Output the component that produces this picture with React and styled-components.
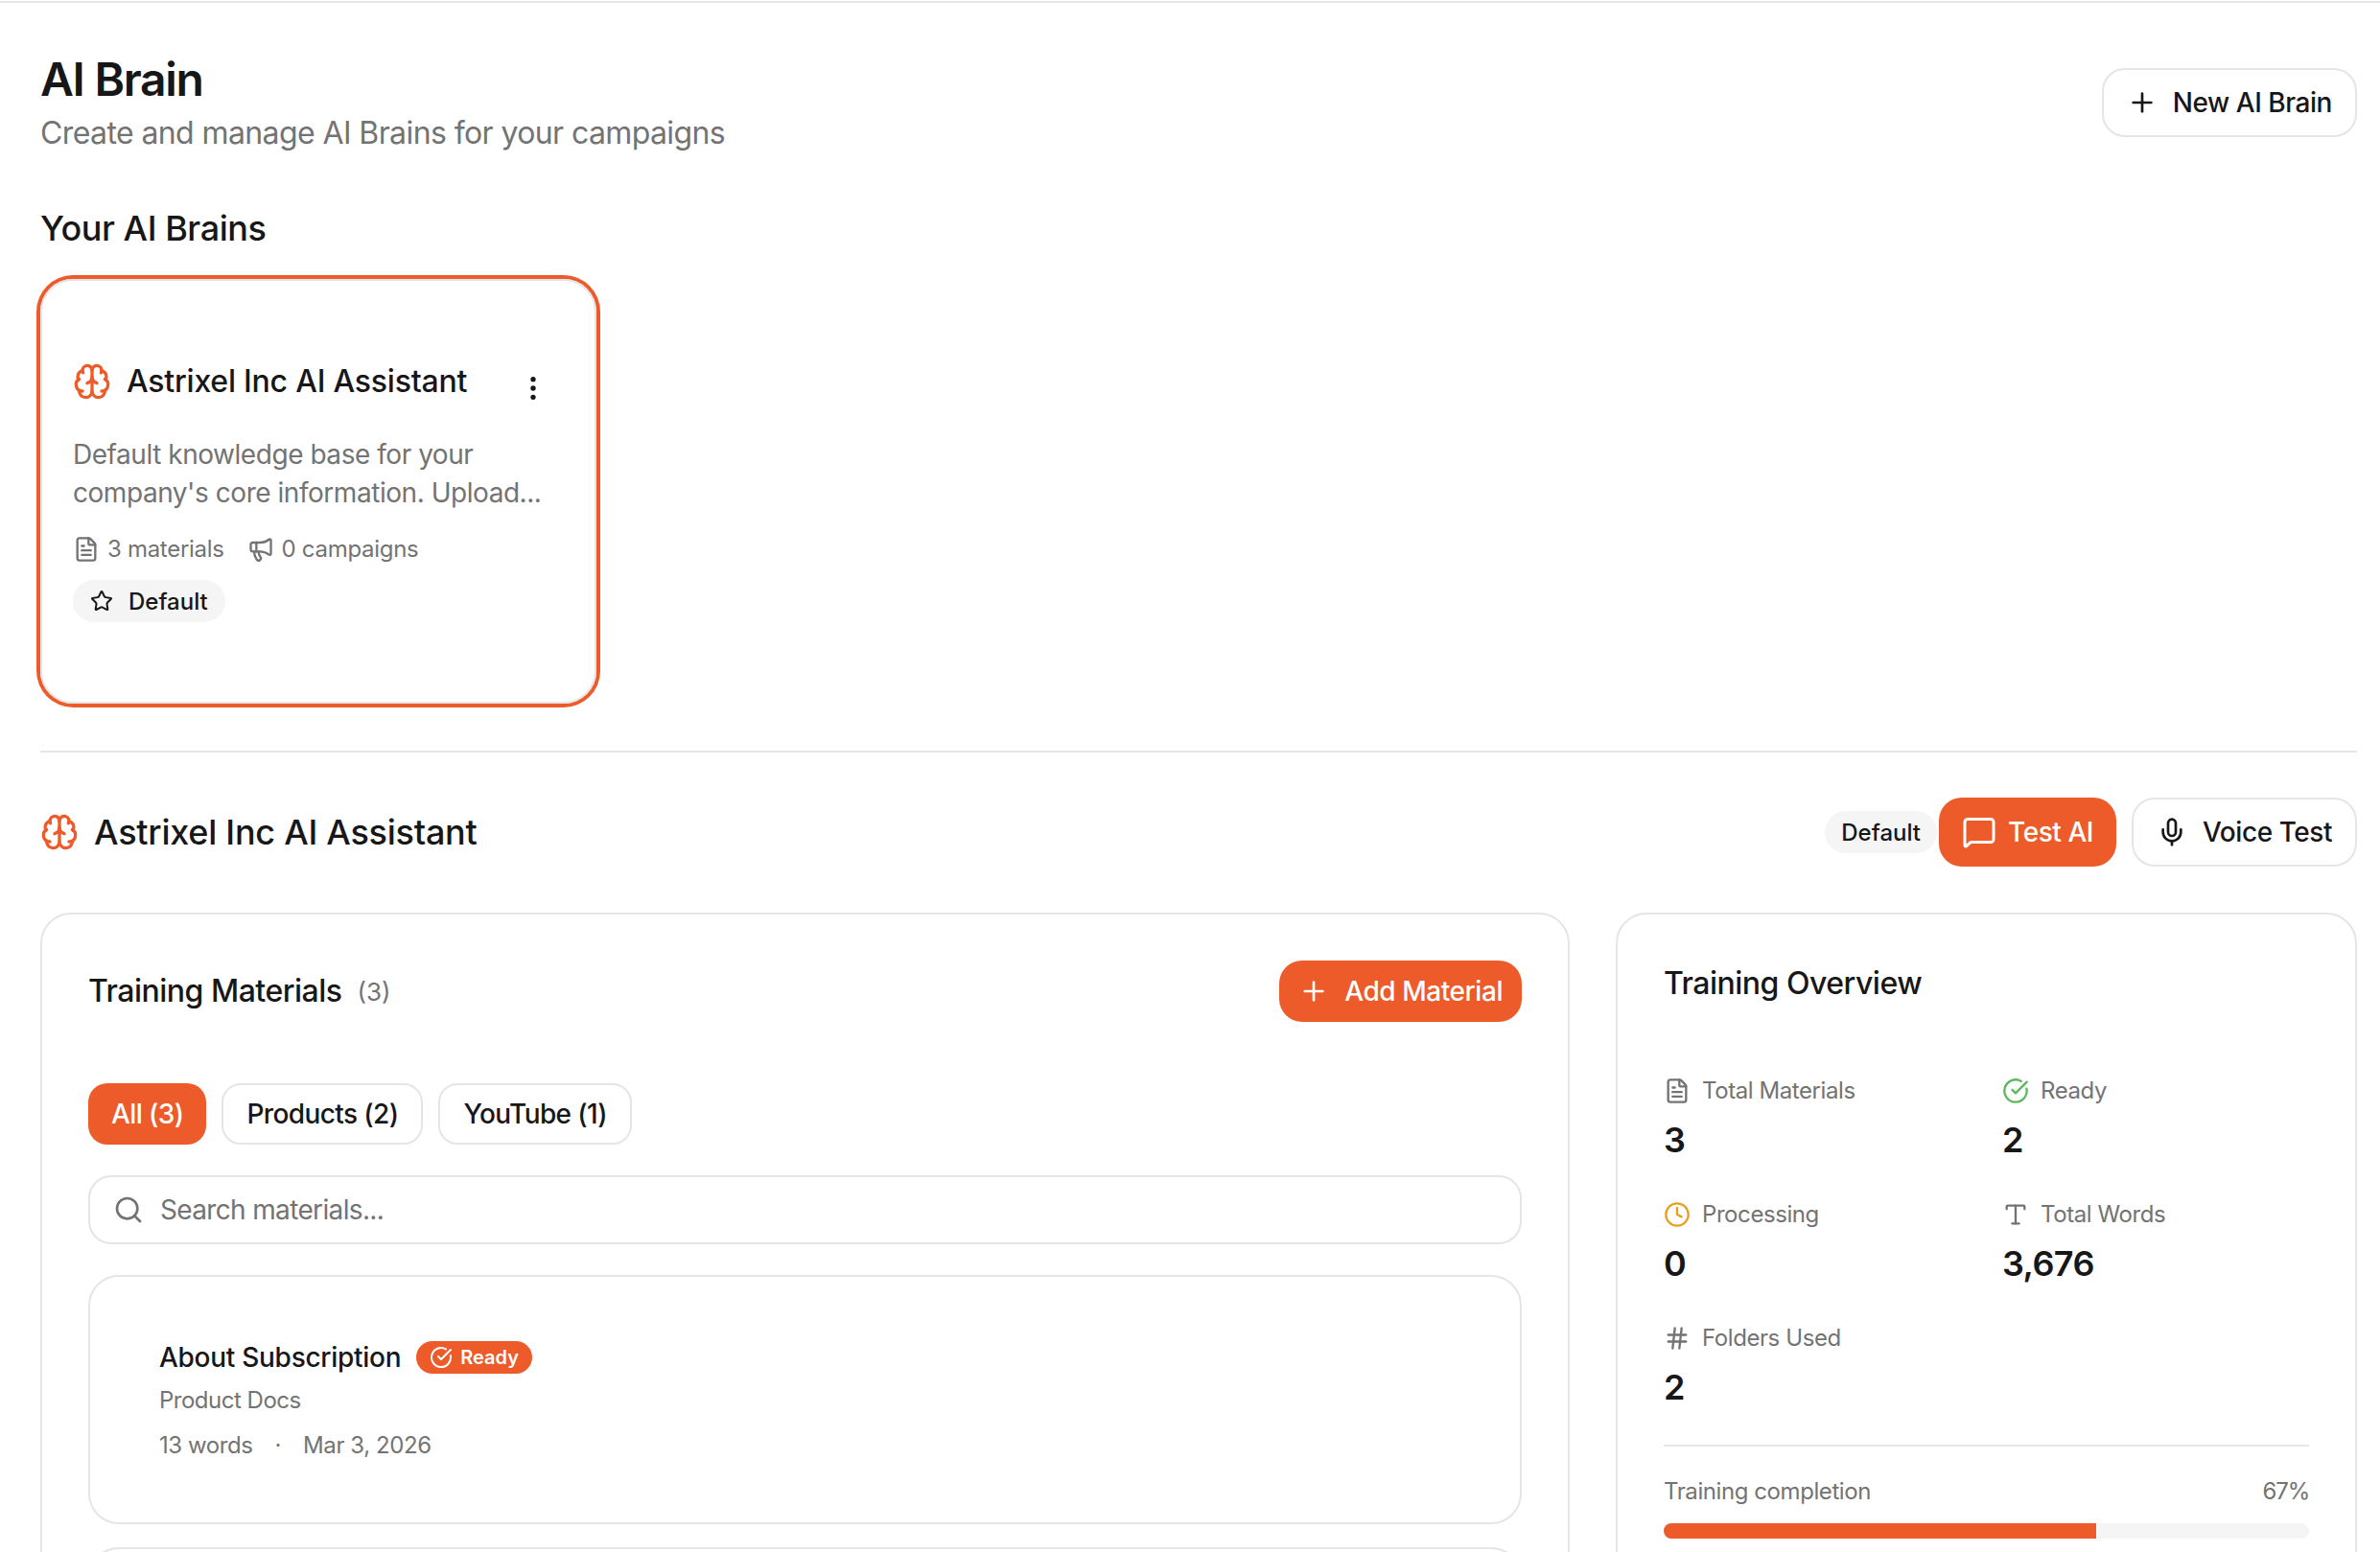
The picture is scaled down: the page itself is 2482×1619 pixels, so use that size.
import React from 'react';
import styled, { createGlobalStyle } from 'styled-components';
import { Brain, CircleCheckBig, Clock, EllipsisVertical, FileText, Hash, Megaphone, MessageSquare, Mic, Plus, Search, Star, Type } from 'lucide-react';

const ORANGE = '#ed5b2a';
const INK = '#171717';
const MUTED = '#737373';
const LINE = '#e5e5e5';

const Global = createGlobalStyle`
  html, body { margin: 0; padding: 0; height: 100%; overflow: hidden; background: #fff; }
  body { font-family: Inter, "Liberation Sans", sans-serif; color: ${INK}; -webkit-font-smoothing: antialiased; }
  * { box-sizing: border-box; }
`;

const Page = styled.div`height: 1619px; overflow: hidden; padding-top: 1px;`;
const TopRule = styled.div`height: 2px; background: ${LINE};`;
const Main = styled.main`padding: 48px 24px 0 42px; display: flex; flex-direction: column;`;

const Header = styled.header`display: flex; justify-content: space-between; align-items: center;`;
const Title = styled.h1`margin: 0; font-size: 48px; line-height: 64px; font-weight: 600; letter-spacing: -1.3px;`;
const Subtitle = styled.p`margin: 0; font-size: 32px; line-height: 48px; color: ${MUTED}; font-weight: 400; letter-spacing: -0.6px;`;

const Button = styled.button`
  display: inline-flex; align-items: center; gap: ${p => p.$gap || 16}px;
  height: ${p => p.$h || 72}px; padding: 0 ${p => p.$px || 24}px;
  border-radius: 24px; font: 500 28px/40px Inter, sans-serif; letter-spacing: -0.45px;
  border: ${p => (p.$primary ? 'none' : `2px solid ${LINE}`)};
  background: ${p => (p.$primary ? ORANGE : '#fff')};
  color: ${p => (p.$primary ? '#fff' : INK)};
`;

const SectionLabel = styled.h2`margin: 47px 0 0; font-size: 36px; line-height: 56px; font-weight: 500; letter-spacing: -0.45px;`;

const BrainCard = styled.article`
  margin: 25px 0 0 0; width: 580px; height: 443px; padding: 81px 48px 0 32px;
  border: 2px solid ${LINE}; border-radius: 34px;
  box-shadow: 0 0 0 4px ${ORANGE};
`;
const CardHead = styled.div`display: flex; justify-content: space-between; align-items: flex-start;`;
const CardTitleGroup = styled.div`display: flex; align-items: center; gap: 16px;`;
const CardTitle = styled.h3`margin: 0; font-size: 32px; line-height: 48px; font-weight: 500; letter-spacing: -0.22px;`;
const MoreButton = styled.span`display: flex; margin-top: 15px; color: ${INK};`;
const Description = styled.p`margin: 32px 0 0; font-size: 28px; line-height: 40px; color: ${MUTED}; letter-spacing: -0.46px;`;
const MetaRow = styled.div`display: flex; gap: 24px; margin-top: 23px; font-size: 24px; line-height: 32px; color: ${MUTED}; letter-spacing: -0.3px;`;
const MetaItem = styled.span`display: inline-flex; align-items: center; gap: 8px;`;
const Badge = styled.span`
  display: inline-flex; align-items: center; gap: ${p => p.$gap || 16}px;
  height: 44px; padding: 0 ${p => p.$px || 18}px; border-radius: 22px;
  background: #f5f5f5; font-size: 24px; font-weight: 500; color: ${INK};
`;
const BadgeRow = styled.div`display: flex; margin-top: 16px;`;

const Divider = styled.hr`margin: 49px 0 0; border: 0; height: 2px; background: ${LINE};`;

const DetailHead = styled.div`display: flex; justify-content: space-between; align-items: center; margin-top: 47px;`;
const DetailTitleGroup = styled.div`display: flex; align-items: center; gap: 16px;`;
const DetailTitle = styled.h2`margin: 0; font-size: 36px; line-height: 56px; font-weight: 500; letter-spacing: -0.25px;`;
const DetailActions = styled.div`display: flex; align-items: center; gap: 16px;`;
const BadgeWithTest = styled.div`display: flex; align-items: center; gap: 2px;`;

const Columns = styled.div`display: grid; grid-template-columns: 1fr 773px; gap: 48px; margin-top: 48px; align-items: start;`;
const Panel = styled.section`border: 2px solid ${LINE}; border-radius: 32px; padding: 48px;`;
const MaterialsHead = styled.div`display: flex; justify-content: space-between; align-items: center;`;
const MaterialsTitle = styled.div`display: flex; align-items: center; gap: 16px;`;
const PanelTitle = styled.h3`margin: 0; font-size: 32px; line-height: 48px; font-weight: 500; letter-spacing: -0.5px;`;
const Count = styled.span`font-size: 26px; color: ${MUTED};`;

const Tabs = styled.div`display: flex; gap: 16px; margin-top: 64px;`;
const Tab = styled.button`
  height: 64px; padding: 0 ${p => (p.$active ? 24 : 24)}px; border-radius: 20px;
  font: 500 28px/40px Inter, sans-serif; letter-spacing: -0.6px;
  border: ${p => (p.$active ? 'none' : `2px solid ${LINE}`)};
  background: ${p => (p.$active ? ORANGE : '#fff')};
  color: ${p => (p.$active ? '#fff' : INK)};
`;

const SearchBox = styled.div`
  display: flex; align-items: center; gap: 17px; height: 72px; margin-top: 32px; padding: 0 24px;
  border: 2px solid ${LINE}; border-radius: 24px; font-size: 28px; color: ${MUTED}; letter-spacing: -0.65px;
`;

const Materials = styled.div`display: flex; flex-direction: column; gap: 24px; margin-top: 32px;`;
const Material = styled.article`
  border: 2px solid ${LINE}; border-radius: 32px; padding: 64px 72px; min-height: 259px;
`;
const MaterialHead = styled.div`display: flex; align-items: center; gap: 16px;`;
const MaterialName = styled.h4`margin: 0; font-size: 28px; line-height: 40px; font-weight: 500; letter-spacing: -0.28px;`;
const ReadyPill = styled.span`
  display: inline-flex; align-items: center; gap: 8px; height: 34px; padding: 0 14px;
  border-radius: 17px; background: ${ORANGE}; color: #fff; font-size: 20px; font-weight: 600;
`;
const Source = styled.div`margin-top: 9px; font-size: 24px; line-height: 32px; color: ${MUTED}; letter-spacing: -0.5px;`;
const MaterialMeta = styled.div`display: flex; gap: 23px; margin-top: 15px; font-size: 24px; line-height: 32px; color: ${MUTED}; letter-spacing: -0.42px;`;

const StatsGrid = styled.div`display: grid; grid-template-columns: 1fr 1fr; column-gap: 33px; row-gap: 42px; margin-top: 72px;`;
const StatLabel = styled.div`display: flex; align-items: center; gap: 12px; font-size: 24px; line-height: 32px; color: ${MUTED}; letter-spacing: -0.42px;`;
const StatIcon = styled.span`display: flex; color: ${p => p.$color || MUTED};`;
const StatValue = styled.div`margin-top: 15px; font-size: 36px; line-height: 40px; font-weight: 600; letter-spacing: -0.6px;`;

const PanelRule = styled.hr`margin: 40px 0 0; border: 0; height: 2px; background: ${LINE};`;
const ProgressRow = styled.div`display: flex; justify-content: space-between; margin-top: 31px; font-size: 24px; line-height: 32px; color: ${MUTED}; letter-spacing: -0.42px;`;
const Percent = styled.span`letter-spacing: -1.2px;`;
const Track = styled.div`height: 16px; margin-top: 17px; border-radius: 8px; background: #f5f5f5; overflow: hidden;`;
const Fill = styled.div`height: 100%; background: ${ORANGE};`;

const stats = [
  { label: 'Total Materials', value: '3', Icon: FileText },
  { label: 'Ready', value: '2', Icon: CircleCheckBig, color: '#5cb85c' },
  { label: 'Processing', value: '0', Icon: Clock, color: '#e8a020' },
  { label: 'Total Words', value: '3,676', Icon: Type },
  { label: 'Folders Used', value: '2', Icon: Hash },
];

export default function App() {
  return (
    <Page>
      <Global />
      <TopRule />
      <Main>
        <Header>
          <div>
            <Title>AI Brain</Title>
            <Subtitle>Create and manage AI Brains for your campaigns</Subtitle>
          </div>
          <Button>
            <Plus size={32} strokeWidth={2} />
            New AI Brain
          </Button>
        </Header>

        <SectionLabel>Your AI Brains</SectionLabel>
        <BrainCard>
          <CardHead>
            <CardTitleGroup>
              <Brain size={40} color={ORANGE} />
              <CardTitle>Astrixel Inc AI Assistant</CardTitle>
            </CardTitleGroup>
            <MoreButton><EllipsisVertical size={32} /></MoreButton>
          </CardHead>
          <Description>Default knowledge base for your company's core information. Upload...</Description>
          <MetaRow>
            <MetaItem><FileText size={28} />3 materials</MetaItem>
            <MetaItem><Megaphone size={28} />0 campaigns</MetaItem>
          </MetaRow>
          <BadgeRow>
            <Badge><Star size={24} />Default</Badge>
          </BadgeRow>
        </BrainCard>

        <Divider />

        <DetailHead>
          <DetailTitleGroup>
            <Brain size={40} color={ORANGE} />
            <DetailTitle>Astrixel Inc AI Assistant</DetailTitle>
          </DetailTitleGroup>
          <DetailActions>
            <BadgeWithTest>
              <Badge $px={17}>Default</Badge>
              <Button $primary $gap={12}>
                <MessageSquare size={36} />
                Test AI
              </Button>
            </BadgeWithTest>
            <Button $gap={16}>
              <Mic size={32} />
              Voice Test
            </Button>
          </DetailActions>
        </DetailHead>

        <Columns>
          <Panel>
            <MaterialsHead>
              <MaterialsTitle>
                <PanelTitle>Training Materials</PanelTitle>
                <Count>(3)</Count>
              </MaterialsTitle>
              <Button $primary $h={64} $px={20}>
                <Plus size={32} />
                Add Material
              </Button>
            </MaterialsHead>
            <Tabs>
              <Tab $active>All (3)</Tab>
              <Tab>Products (2)</Tab>
              <Tab>YouTube (1)</Tab>
            </Tabs>
            <SearchBox>
              <Search size={32} />
              Search materials...
            </SearchBox>
            <Materials>
              <Material>
                <MaterialHead>
                  <MaterialName>About Subscription</MaterialName>
                  <ReadyPill><CircleCheckBig size={24} />Ready</ReadyPill>
                </MaterialHead>
                <Source>Product Docs</Source>
                <MaterialMeta>
                  <span>13 words</span>
                  <span>·</span>
                  <span>Mar 3, 2026</span>
                </MaterialMeta>
              </Material>
              <Material />
            </Materials>
          </Panel>

          <Panel>
            <PanelTitle>Training Overview</PanelTitle>
            <StatsGrid>
              {stats.map(({ label, value, Icon, color }) => (
                <div key={label}>
                  <StatLabel>
                    <StatIcon $color={color}><Icon size={28} /></StatIcon>
                    {label}
                  </StatLabel>
                  <StatValue>{value}</StatValue>
                </div>
              ))}
            </StatsGrid>
            <PanelRule />
            <ProgressRow>
              <span>Training completion</span>
              <Percent>67%</Percent>
            </ProgressRow>
            <Track>
              <Fill style={{ width: '67%' }} />
            </Track>
          </Panel>
        </Columns>
      </Main>
    </Page>
  );
}
